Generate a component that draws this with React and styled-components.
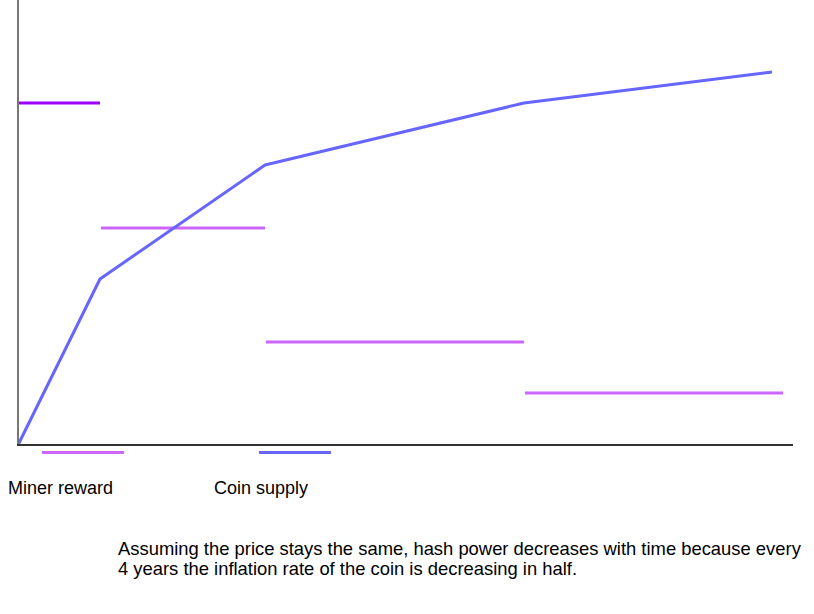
import React from 'react'
import styled, { createGlobalStyle } from 'styled-components'

const GlobalStyle = createGlobalStyle`
  html, body {
    margin: 0;
    padding: 0;
    background: #fff;
  }
  body {
    font-family: 'Liberation Sans', Arial, sans-serif;
    color: #000;
  }
`

const Page = styled.div`
  width: 814px;
  height: 614px;
  overflow: hidden;
`

const Chart = styled.svg`
  display: block;
  width: 814px;
  height: 448px;
`

const Legend = styled.div`
  display: flex;
  padding-left: 8px;
  margin-top: 3px;
`

const LegendItem = styled.div`
  display: flex;
  flex-direction: column;
  width: ${props => props.width}px;
`

const Swatch = styled.span`
  display: block;
  height: 3px;
  width: ${props => props.length}px;
  margin-left: ${props => props.offset}px;
  background: ${props => props.color};
`

const Label = styled.span`
  margin-top: 23px;
  font-size: 18px;
  line-height: 22px;
`

const Caption = styled.p`
  margin: 40px 0 0 118px;
  width: 692px;
  font-size: 18.4px;
  line-height: 20px;
`

const SUPPLY = '#6666ff'
const REWARD = '#cc66ff'

const rewards = [
  { x1: 18, x2: 100, y: 103, color: '#9900ff' },
  { x1: 101, x2: 265, y: 228, color: REWARD },
  { x1: 266, x2: 524, y: 342, color: REWARD },
  { x1: 525, x2: 783, y: 393, color: REWARD },
]

const supply = [
  [18, 445],
  [100, 279],
  [265, 165],
  [524, 103],
  [772, 72],
]

const App = () => (
  <Page>
    <GlobalStyle />
    <Chart viewBox="0 0 814 448">
      {rewards.map(r => (
        <line
          key={r.x1}
          x1={r.x1}
          x2={r.x2}
          y1={r.y}
          y2={r.y}
          stroke={r.color}
          strokeWidth="3"
        />
      ))}
      <polyline
        points={supply.map(p => p.join(',')).join(' ')}
        fill="none"
        stroke={SUPPLY}
        strokeWidth="3"
        strokeLinejoin="round"
      />
      <line x1="18" y1="0" x2="18" y2="445" stroke="#777" strokeWidth="2" />
      <line x1="17" y1="445" x2="793" y2="445" stroke="#333" strokeWidth="2" />
    </Chart>
    <Legend>
      <LegendItem width={206}>
        <Swatch color={REWARD} length={82} offset={34} />
        <Label>Miner reward</Label>
      </LegendItem>
      <LegendItem width={200}>
        <Swatch color={SUPPLY} length={72} offset={45} />
        <Label>Coin supply</Label>
      </LegendItem>
    </Legend>
    <Caption>
      Assuming the price stays the same, hash power decreases with time because every 4 years
      the inflation rate of the coin is decreasing in half.
    </Caption>
  </Page>
)

export default App
